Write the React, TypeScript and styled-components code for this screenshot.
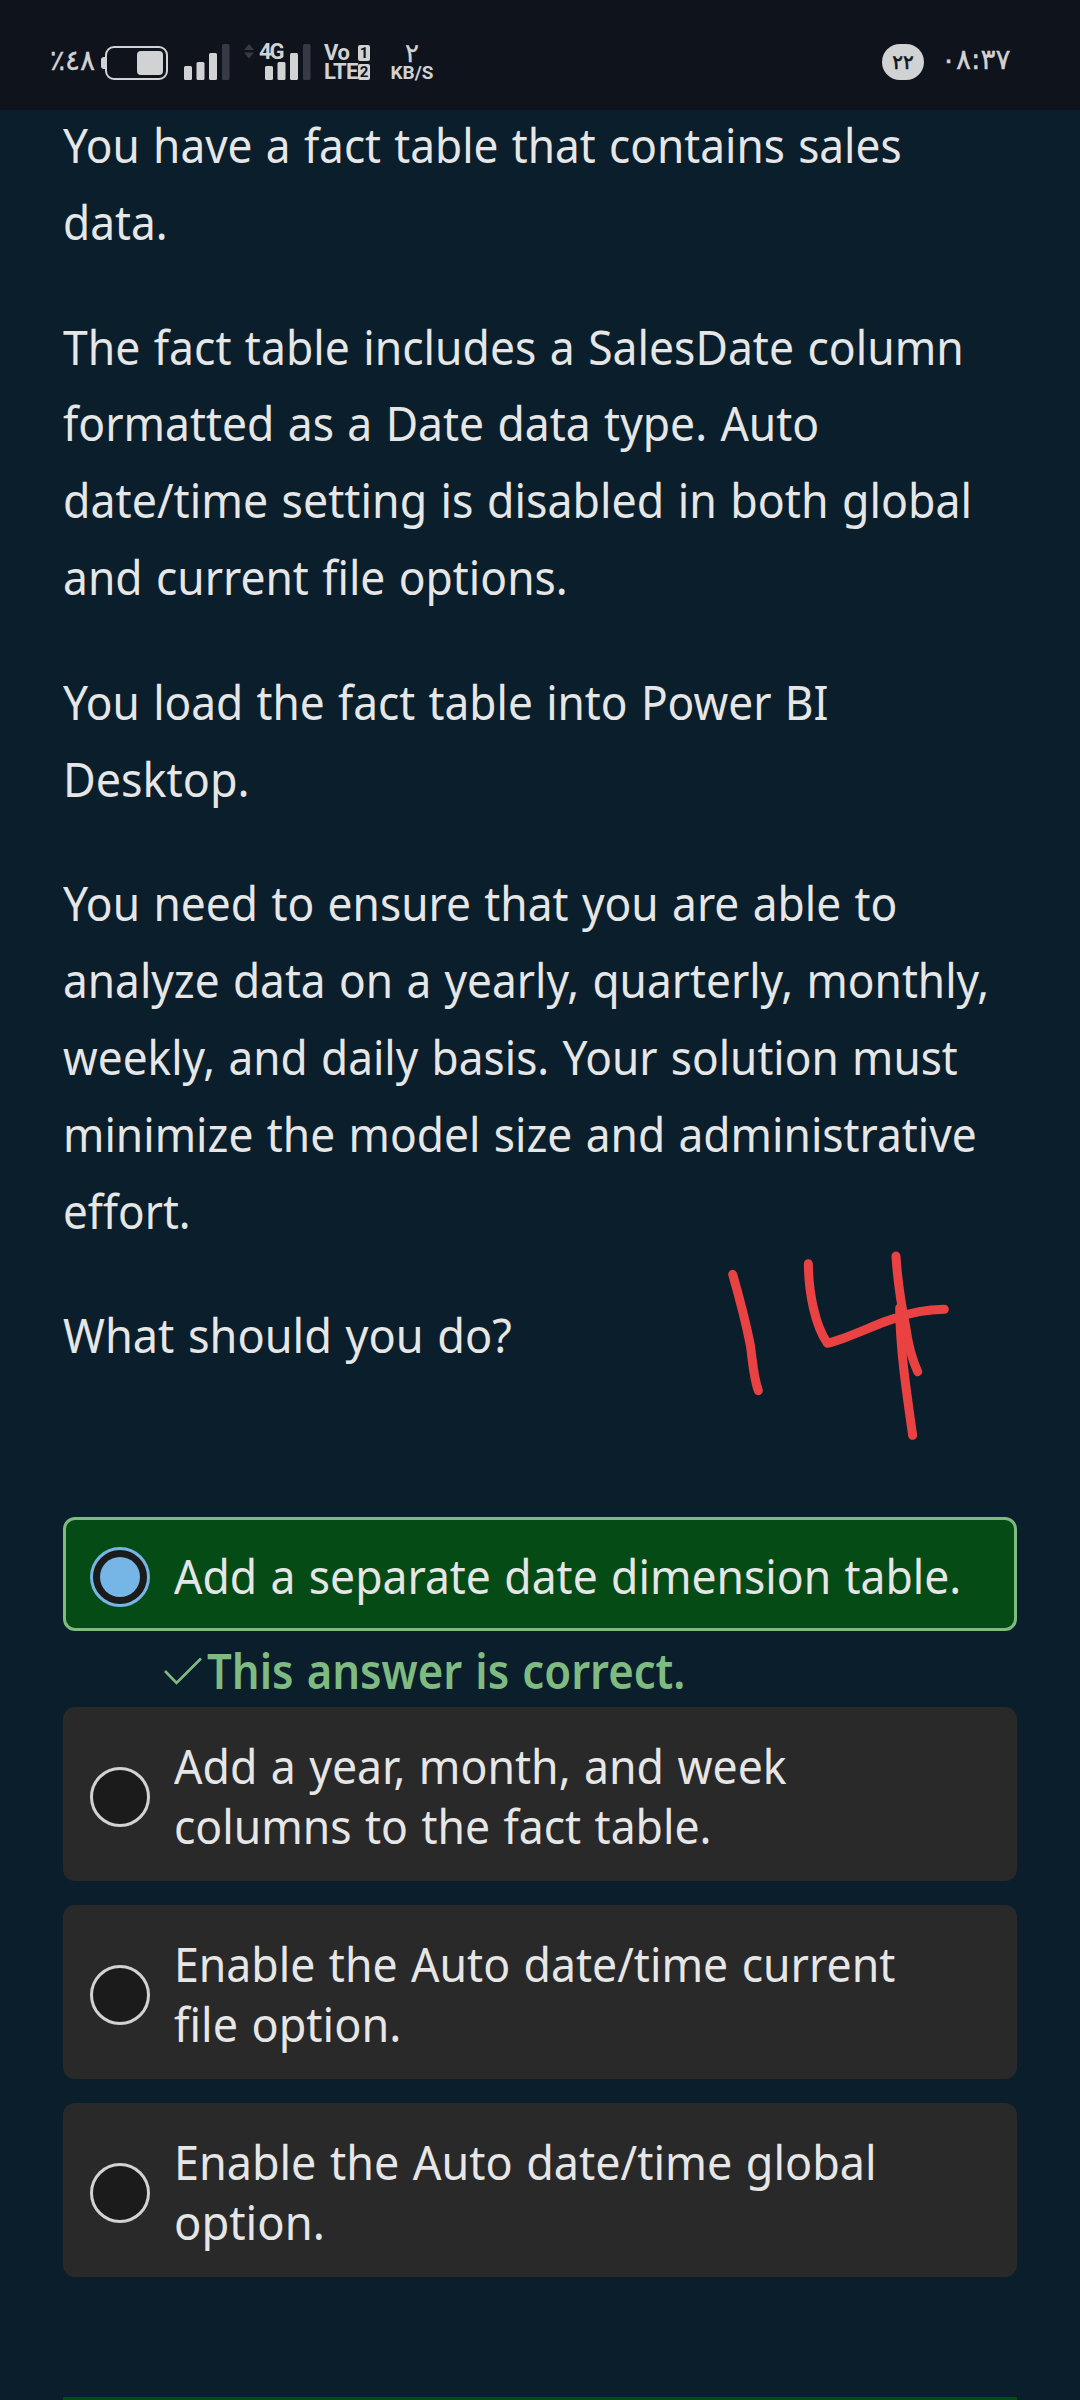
import React, { useLayoutEffect, useRef, useState } from "react";
import styled, { createGlobalStyle } from "styled-components";

const GlobalStyle = createGlobalStyle`
  html, body { margin: 0; background: #0a1f2b; }
  * { box-sizing: border-box; }
`;

const Screen = styled.div`
  position: relative;
  width: 1080px;
  height: 2400px;
  overflow: hidden;
  background: #0a1f2b;
  color: #e6e6e6;
  font-family: "Noto Sans", "Open Sans", sans-serif;
  font-size: 48px;
`;

const StatusBar = styled.header`
  display: flex;
  justify-content: space-between;
  height: 110px;
  padding: 43px 71px 0 50px;
  background: #0f131c;
  color: #d1d2d4;
`;

const StatusGroup = styled.div`
  display: flex;
  align-items: flex-start;
`;

const Digits = styled.span<{ $size: number; $width: number; $top?: number; $track?: number }>`
  width: ${(p) => p.$width}px;
  margin-top: ${(p) => p.$top ?? 0}px;
  font-family: "DejaVu Sans", sans-serif;
  font-size: ${(p) => p.$size}px;
  line-height: 30px;
  letter-spacing: ${(p) => p.$track ?? 0}px;
  direction: ltr;
  unicode-bidi: bidi-override;
  white-space: nowrap;
  -webkit-text-stroke: 0.4px #d1d2d4;
`;

const StatusIcon = styled.svg<{ $left?: number }>`
  display: block;
  flex: none;
  margin-left: ${(p) => p.$left ?? 0}px;
`;

const Network = styled.div`
  position: relative;
  margin-left: 14px;
`;

const NetworkLabel = styled.span`
  position: absolute;
  left: 15px;
  top: -1px;
  font: 700 22px/20px Roboto, sans-serif;
  letter-spacing: -2px;
`;

const Stack = styled.div<{ $left: number; $width: number }>`
  display: flex;
  flex-direction: column;
  align-items: center;
  width: ${(p) => p.$width}px;
  margin-left: ${(p) => p.$left}px;
`;

const VolteRow = styled.div`
  display: flex;
  align-items: center;
  justify-content: space-between;
  width: 100%;
  height: 19px;
  font: 700 22px/19px Roboto, sans-serif;
  letter-spacing: -0.5px;
`;

const SimBadge = styled.span`
  display: flex;
  align-items: center;
  justify-content: center;
  width: 12px;
  height: 16px;
  border-radius: 2px;
  background: #d1d2d4;
  color: #0f131c;
  font: 700 15px/16px Roboto, sans-serif;
  letter-spacing: 0;
`;

const SpeedUnit = styled.span`
  margin-top: -5px;
  font: 700 19px/20px Roboto, sans-serif;
`;

const NoticeCount = styled.span`
  display: flex;
  align-items: center;
  justify-content: center;
  width: 42px;
  height: 36px;
  margin: 1px 17px 0 0;
  border-radius: 18px;
  background: #d1d2d4;
  color: #0f131c;
  font: 400 20px/36px "DejaVu Sans", sans-serif;
  -webkit-text-stroke: 0.6px #0f131c;
`;

const Content = styled.main`
  margin-top: -3px;
  padding: 0 63px;
`;

const Paragraph = styled.p`
  margin: 0 0 48px;
  line-height: 76.8px;
`;

const LineText = styled.span`
  display: block;
  width: max-content;
  white-space: nowrap;
  word-spacing: 2px;
  transform-origin: left center;
`;

const Choices = styled.section`
  display: flex;
  flex-direction: column;
  gap: 24px;
  margin-top: 143px;
`;

const Choice = styled.label<{ $correct?: boolean }>`
  display: flex;
  align-items: center;
  gap: 24px;
  padding: 27px 24px 21px;
  border: 3px solid ${(p) => (p.$correct ? "#7fba81" : "#292929")};
  border-radius: 12px;
  background: ${(p) => (p.$correct ? "#054b16" : "#292929")};
`;

const Radio = styled.span<{ $checked?: boolean }>`
  display: flex;
  flex: none;
  align-items: center;
  justify-content: center;
  width: 60px;
  height: 60px;
  border: 3px solid ${(p) => (p.$checked ? "#75b6e7" : "#d2d2d2")};
  border-radius: 50%;
  background: #1b1b1b;
  &::after {
    content: "";
    width: 40px;
    height: 40px;
    border-radius: 50%;
    background: ${(p) => (p.$checked ? "#75b6e7" : "transparent")};
  }
`;

const ChoiceText = styled.span`
  flex: 1;
  min-width: 0;
  margin: -1px 0 1px;
  line-height: 60px;
`;

const Feedback = styled.div`
  display: flex;
  align-items: center;
  height: 76px;
  margin: -24px 0;
  padding: 3px 0 0 100px;
  gap: 4px;
  color: #7fba81;
  font-weight: 600;
`;

const NextButton = styled.div`
  height: 60px;
  margin-top: 120px;
  background: #054b16;
`;

const Ink = styled.svg`
  position: absolute;
  left: 680px;
  top: 1220px;
`;

type TextLine = { text: string; width: number };

/* Condenses a line of text horizontally so that it takes the given measure. */
function Line({ text, width }: TextLine) {
  const ref = useRef<HTMLSpanElement>(null);
  const [scale, setScale] = useState(1);
  useLayoutEffect(() => {
    if (ref.current) setScale(width / ref.current.offsetWidth);
  }, [text, width]);
  return (
    <LineText ref={ref} style={{ transform: `scaleX(${scale})` }}>
      {text}
    </LineText>
  );
}

const paragraphs: TextLine[][] = [
  [
    { text: "You have a fact table that contains sales", width: 839 },
    { text: "data.", width: 105 },
  ],
  [
    { text: "The fact table includes a SalesDate column", width: 901 },
    { text: "formatted as a Date data type. Auto", width: 756 },
    { text: "date/time setting is disabled in both global", width: 909.5 },
    { text: "and current file options.", width: 504.5 },
  ],
  [
    { text: "You load the fact table into Power BI", width: 765 },
    { text: "Desktop.", width: 187 },
  ],
  [
    { text: "You need to ensure that you are able to", width: 834.5 },
    { text: "analyze data on a yearly, quarterly, monthly,", width: 926.5 },
    { text: "weekly, and daily basis. Your solution must", width: 894.5 },
    { text: "minimize the model size and administrative", width: 914 },
    { text: "effort.", width: 127.5 },
  ],
  [{ text: "What should you do?", width: 449 }],
];

const otherChoices: TextLine[][] = [
  [
    { text: "Add a year, month, and week", width: 613 },
    { text: "columns to the fact table.", width: 537.5 },
  ],
  [
    { text: "Enable the Auto date/time current", width: 721.5 },
    { text: "file option.", width: 227.5 },
  ],
  [
    { text: "Enable the Auto date/time global", width: 702.5 },
    { text: "option.", width: 151 },
  ],
];

const SignalBars = ({ x = 0 }: { x?: number }) => (
  <g fill="#d1d2d4">
    <rect x={x} y="23" width="8" height="14" rx="1.5" />
    <rect x={x + 12.5} y="19" width="8" height="18" rx="1.5" />
    <rect x={x + 25} y="10" width="8" height="27" rx="1.5" />
    <rect x={x + 38} y="1" width="7.5" height="36" rx="1.5" fill="#373a42" />
  </g>
);

export default function App() {
  return (
    <>
      <GlobalStyle />
      <Screen>
        <StatusBar>
          <StatusGroup>
            <Digits $size={28} $width={51} $top={3}>٪٤٨</Digits>
            <StatusIcon width="67" height="38" viewBox="0 0 67 38">
              <rect x="5" y="4" width="61" height="32" rx="8" fill="none" stroke="#d1d2d4" strokeWidth="2" />
              <path d="M4 14v12H3a3 3 0 0 1-3-3v-6a3 3 0 0 1 3-3z" fill="#d1d2d4" />
              <rect x="36" y="8" width="26" height="24" rx="4" fill="#d1d2d4" />
            </StatusIcon>
            <StatusIcon $left={16} width="46" height="38">
              <SignalBars />
            </StatusIcon>
            <Network>
              <StatusIcon width="67" height="38">
                <path d="M0 7l5-6 5 6zM0 9.500h10l-5 6z" fill="#373a42" />
                <SignalBars x={21} />
              </StatusIcon>
              <NetworkLabel>4G</NetworkLabel>
            </Network>
            <Stack $left={13} $width={46}>
              <VolteRow>Vo<SimBadge>1</SimBadge></VolteRow>
              <VolteRow>LTE<SimBadge>2</SimBadge></VolteRow>
            </Stack>
            <Stack $left={20} $width={44}>
              <Digits $size={26} $width={14} $top={-5}>٢</Digits>
              <SpeedUnit>KB/S</SpeedUnit>
            </Stack>
          </StatusGroup>
          <StatusGroup>
            <NoticeCount>٢٢</NoticeCount>
            <Digits $size={28} $width={68} $top={2}>٠٨:٣٧</Digits>
          </StatusGroup>
        </StatusBar>
        <Content>
          {paragraphs.map((lines, i) => (
            <Paragraph key={i}>
              {lines.map((l) => (
                <Line key={l.text} {...l} />
              ))}
            </Paragraph>
          ))}
          <Choices>
            <Choice $correct>
              <Radio $checked />
              <ChoiceText>
                <Line text="Add a separate date dimension table." width={787} />
              </ChoiceText>
            </Choice>
            <Feedback>
              <svg width="40" height="30" viewBox="0 0 40 30" fill="none" stroke="#7fba81" strokeWidth="2.600">
                <path d="M2 15 13.500 27 38 2.500" />
              </svg>
              <Line text="This answer is correct." width={478} />
            </Feedback>
            {otherChoices.map((lines, i) => (
              <Choice key={i}>
                <Radio />
                <ChoiceText>
                  {lines.map((l) => (
                    <Line key={l.text} {...l} />
                  ))}
                </ChoiceText>
              </Choice>
            ))}
          </Choices>
          <NextButton />
        </Content>
        <Ink width="320" height="240" viewBox="0 0 960 720" fill="none" stroke="#ea4242" strokeWidth="27" strokeLinecap="round" strokeLinejoin="round">
          <path d="M158 163C180 240 198 310 211 375C218 425 220 470 235 512" />
          <path d="M385 131C386 220 405 315 442 370C520 350 600 305 650 294C700 275 740 269 793 268" />
          <path d="M648 108C653 190 665 260 677 320C684 370 697 420 713 455" />
          <path d="M659 264C660 390 680 520 698 646" />
        </Ink>
      </Screen>
    </>
  );
}
